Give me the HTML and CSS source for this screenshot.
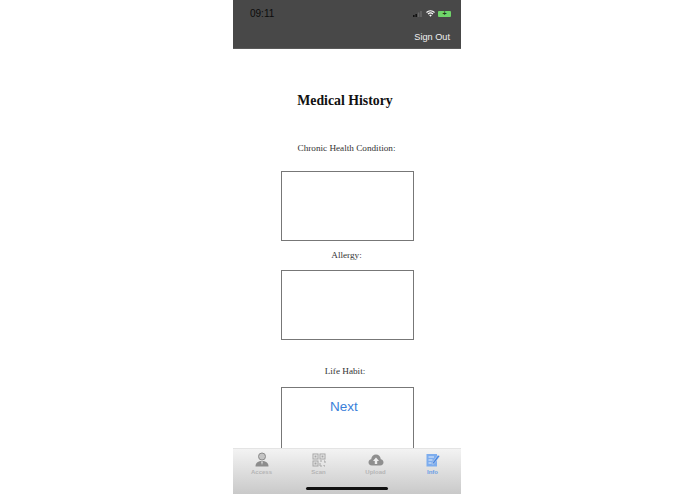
FILE: index.html
```html
<!DOCTYPE html>
<html>
<head>
<meta charset="UTF-8">
<title>Medical History</title>
<link rel="stylesheet" href="styles.css">
</head>
<body>

<section class="phone">
  <!--Header-->
  <header class="top-bar">
    <div class="status-row">
      <span class="clock">09:11</span>
      <div class="status-icons">
        <svg width="10" height="6" viewBox="0 0 10 6">
          <rect x="0" y="4" width="1.6" height="2" fill="#111"/>
          <rect x="2.4" y="3" width="1.6" height="3" fill="#111"/>
          <rect x="4.8" y="1.5" width="1.6" height="4.5" fill="#666"/>
          <rect x="7.2" y="0" width="1.6" height="6" fill="#666"/>
        </svg>
        <svg width="9" height="7" viewBox="0 0 18 14">
          <path d="M1 5 C5.500 0.500 12.500 0.500 17 5" fill="none" stroke="#fff" stroke-width="2.200"/>
          <path d="M4 8 C7 5.300 11 5.300 14 8" fill="none" stroke="#fff" stroke-width="2.200"/>
          <path d="M6.500 10.500 L9 13.500 L11.500 10.500 C10 9.300 8 9.300 6.500 10.500 Z" fill="#fff"/>
        </svg>
        <div class="battery"><span class="bolt">+</span></div>
      </div>
    </div>
    <div class="action-row">
      <span class="sign-out">Sign Out</span>
    </div>
  </header>

  <!--Form-->
  <main class="content">
    <h1>Medical History</h1>
    <p class="label label-chronic">Chronic Health Condition:</p>
    <div class="box"></div>
    <p class="label label-allergy">Allergy:</p>
    <div class="box"></div>
    <p class="label label-habit">Life Habit:</p>
    <div class="box box-last">
      <span class="next">Next</span>
    </div>
  </main>

  <!--Tabs-->
  <nav class="tab-bar">
    <div class="tabs">
      <div class="tab">
        <svg width="16" height="16" viewBox="0 0 16 16">
          <circle cx="8" cy="4.500" r="3.500" fill="#c4c4c4" stroke="#8a8a8a" stroke-width="1"/>
          <path d="M1.500 14.500 C1.500 10.500 4.500 9 8 9 C11.500 9 14.500 10.500 14.500 14.500 Z" fill="#8c8c8c"/>
          <path d="M7 9.500 H9 L8 13 Z" fill="#ddd"/>
        </svg>
        <span>Access</span>
      </div>
      <div class="tab">
        <svg width="14" height="14" viewBox="0 0 14 14" fill="none" stroke="#a6a6a6" stroke-width="1">
          <rect x="1" y="1" width="5" height="5"/>
          <rect x="8" y="1" width="5" height="5"/>
          <rect x="1" y="8" width="5" height="5"/>
          <rect x="3" y="3" width="1" height="1" fill="#a6a6a6"/>
          <rect x="10" y="3" width="1" height="1" fill="#a6a6a6"/>
          <rect x="3" y="10" width="1" height="1" fill="#a6a6a6"/>
          <path d="M8 8 H10 M12 8 H13 V10 M8 10 V13 H10 M12 12 V13 H13"/>
        </svg>
        <span>Scan</span>
      </div>
      <div class="tab">
        <svg width="16" height="14" viewBox="0 0 16 14">
          <path d="M4 12.500 C1.500 12.500 0.500 10.800 0.500 9.300 C0.500 7.600 1.700 6.400 3.200 6.200 C3.500 3.400 5.500 1.500 8 1.500 C10.500 1.500 12.500 3.400 12.800 6.200 C14.300 6.400 15.500 7.600 15.500 9.300 C15.500 10.800 14.500 12.500 12 12.500 Z" fill="#8f8f8f"/>
          <path d="M8 4.500 L11 8 H9.200 V11 H6.800 V8 H5 Z" fill="#eee"/>
        </svg>
        <span>Upload</span>
      </div>
      <div class="tab tab-active">
        <svg width="14" height="14" viewBox="0 0 14 14">
          <rect x="0.500" y="1" width="10.500" height="12.500" fill="#7dadee"/>
          <path d="M2.500 4 H8 M2.500 7 H6.500 M2.500 10 H5.500" stroke="#e6eefb" stroke-width="1"/>
          <path d="M6.500 9.500 L12 2 L13.800 3.300 L8 10.800 L6.200 11.200 Z" fill="#4a88e2" stroke="#e6e6e6" stroke-width="0.500"/>
        </svg>
        <span>Info</span>
      </div>
    </div>
    <div class="home-line"></div>
  </nav>
</section>

</body>
</html>
```

FILE: styles.css
```css
* {
  padding: 0;
  margin: 0;
  box-sizing: border-box;
}

body {
  height: 100vh;
  display: flex;
  justify-content: center;
  padding-right: 1px;
  background: #fff;
  overflow: hidden;
}

.phone {
  width: 228px;
  height: 494px;
  display: flex;
  flex-direction: column;
}

.top-bar {
  height: 49px;
  background: #484848;
  border-bottom: 1px solid #5a5a5a;
  font-family: "Liberation Sans", Arial, sans-serif;
}

.status-row {
  height: 24px;
  padding: 3px 10px 0 17px;
  display: flex;
  justify-content: space-between;
  align-items: center;
}

.clock {
  font-size: 10px;
  color: #0c0c0c;
}

.status-icons {
  display: flex;
  align-items: center;
  gap: 3px;
}

.battery {
  width: 13px;
  height: 6px;
  background: #6fd469;
  border-radius: 1px;
  display: flex;
  align-items: center;
  justify-content: center;
}

.bolt {
  font-size: 7px;
  line-height: 6px;
  font-weight: bold;
  color: #1c3a1c;
}

.action-row {
  display: flex;
  justify-content: flex-end;
  padding: 5px 11px 0 0;
}

.sign-out {
  font-size: 9.200px;
  line-height: 16px;
  color: #f0f0f0;
}

.content {
  flex: 1;
  min-height: 0;
  overflow: hidden;
  padding-top: 43px;
  display: flex;
  flex-direction: column;
  align-items: center;
  font-family: "Liberation Serif", "Times New Roman", serif;
}

h1 {
  font-size: 13.800px;
  line-height: 18px;
  font-weight: bold;
  color: #111;
  margin-right: 4px;
}

.label {
  font-size: 9.200px;
  line-height: 12px;
  color: #333;
  margin-right: 1px;
}

.label-chronic {
  margin-top: 32px;
  margin-bottom: 17px;
}

.label-allergy {
  margin-top: 8px;
  margin-bottom: 9px;
}

.label-habit {
  margin-top: 25px;
  margin-bottom: 10px;
  margin-right: 4px;
}

.box {
  width: 133px;
  height: 70px;
  flex: none;
  border: 1px solid #777;
}

.box-last {
  height: 80px;
  text-align: center;
}

.next {
  display: block;
  padding: 10px 6px 0 0;
  font-family: "Liberation Sans", Arial, sans-serif;
  font-size: 13.500px;
  line-height: 17px;
  color: #3b7fd9;
}

.tab-bar {
  height: 46px;
  flex: none;
  background: linear-gradient(#f3f3f3, #c9c9c9);
  border-top: 1px solid #e4e4e4;
  font-family: "Liberation Sans", Arial, sans-serif;
}

.tabs {
  display: flex;
  padding: 3px 0 0 0;
  height: 36px;
}

.tab {
  flex: 1;
  display: flex;
  flex-direction: column;
  align-items: center;
  font-size: 6px;
  font-weight: bold;
  line-height: 7px;
  color: #b5b5b5;
}

.tab svg {
  height: 16px;
  margin-bottom: 1px;
}

.tab-active {
  color: #6a9de6;
}

.home-line {
  width: 82px;
  height: 3px;
  margin: 2px auto 0;
  border-radius: 2px;
  background: #111;
}
```
